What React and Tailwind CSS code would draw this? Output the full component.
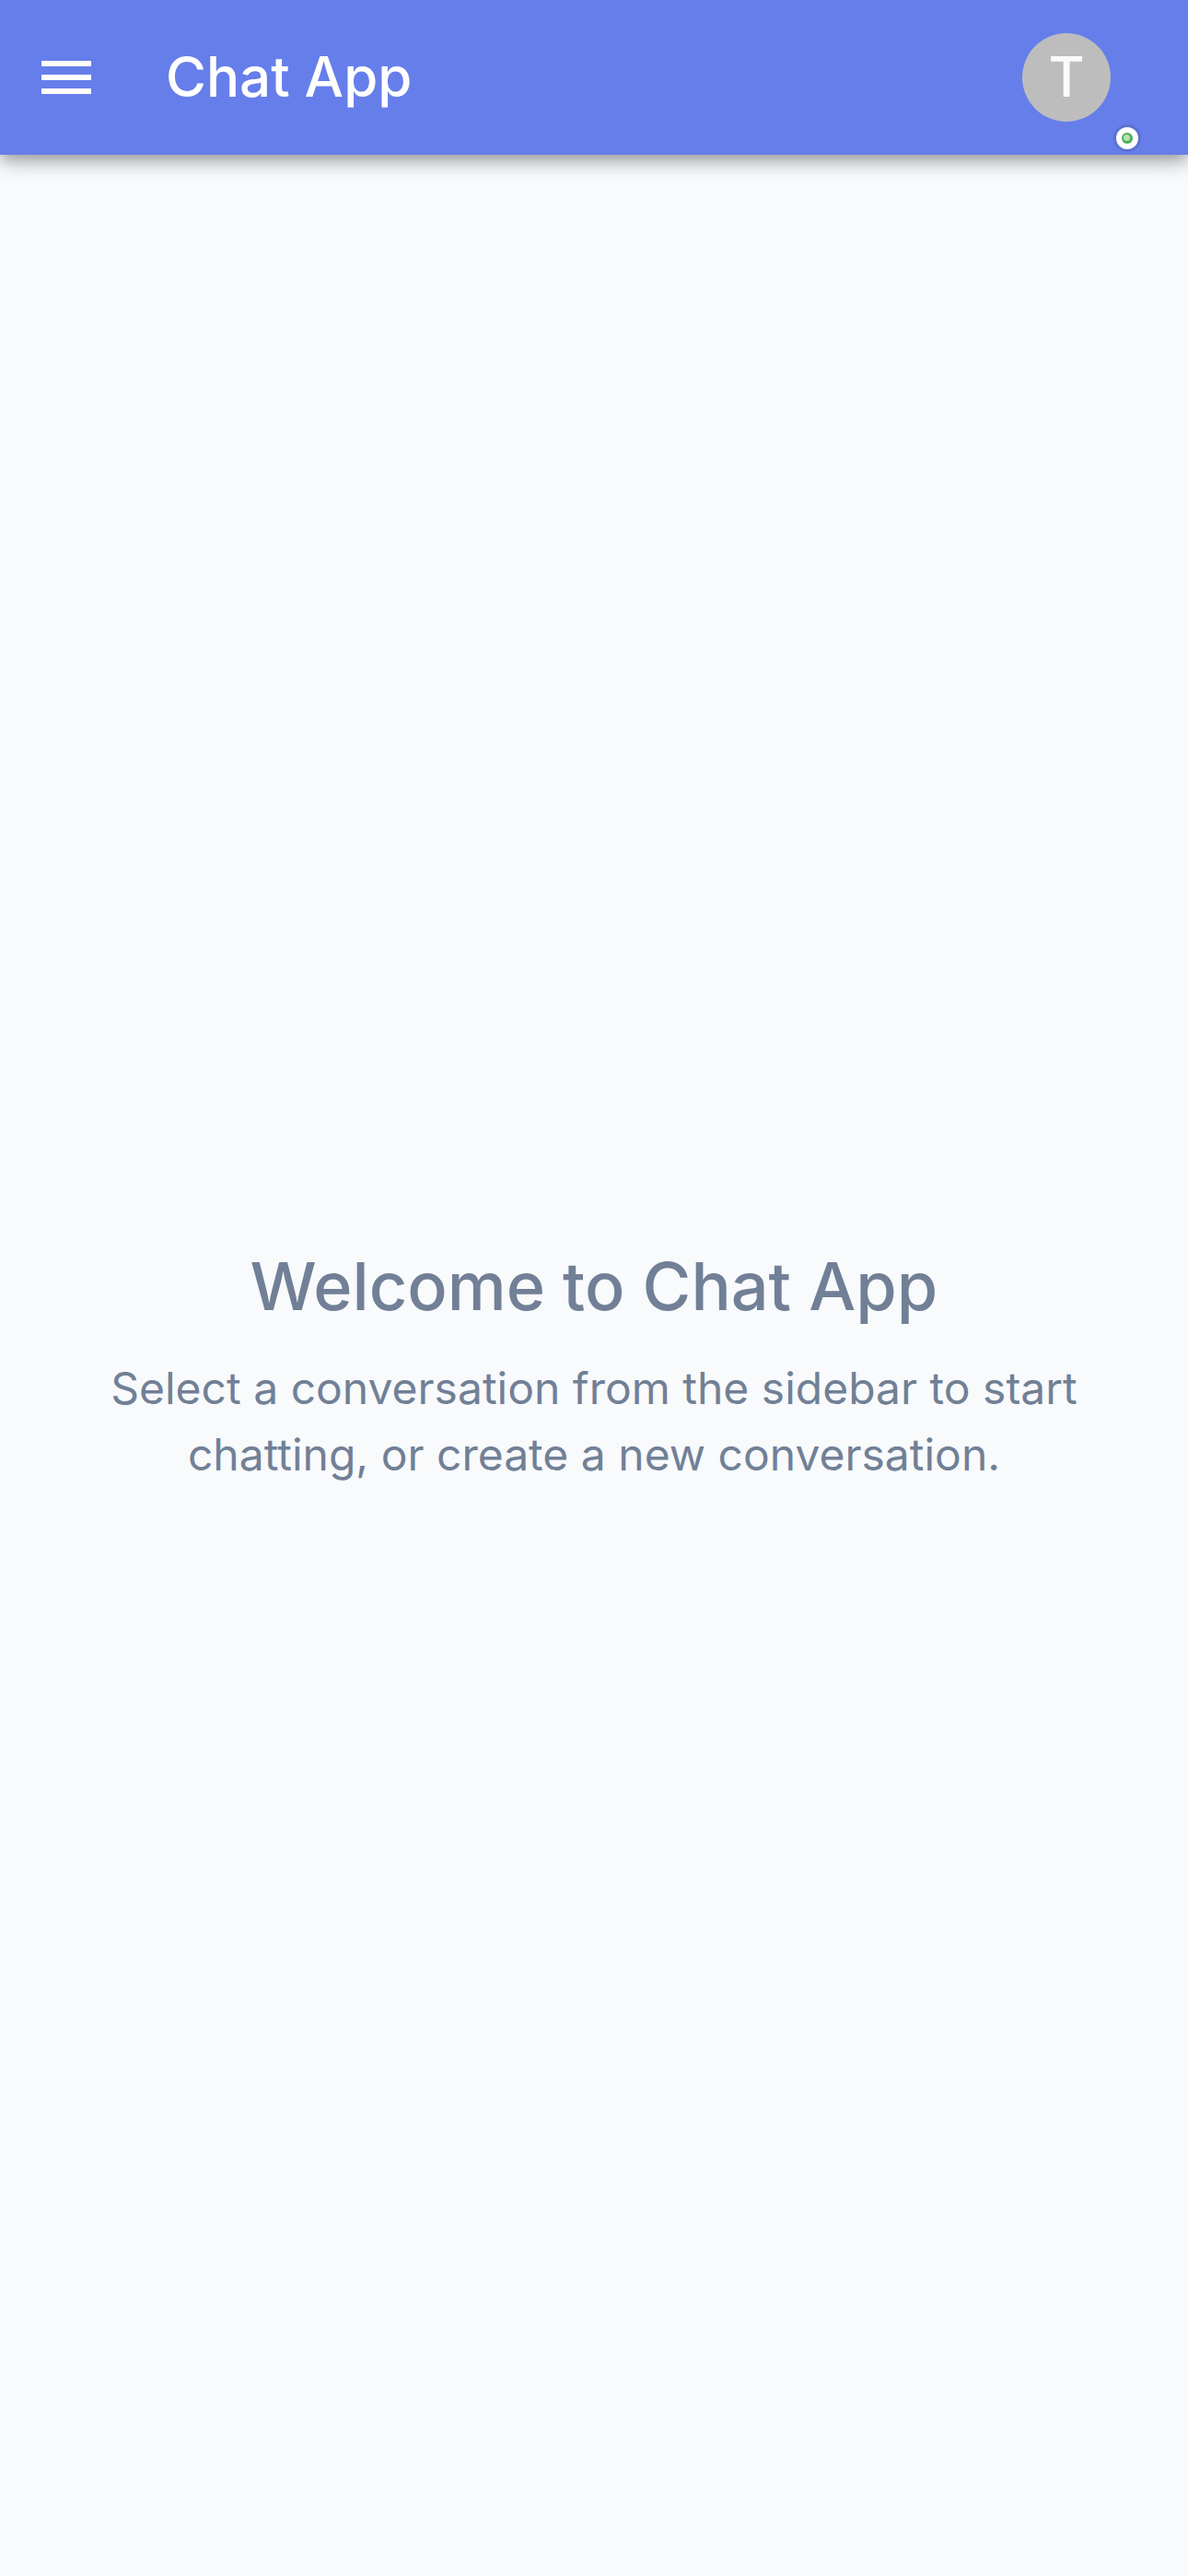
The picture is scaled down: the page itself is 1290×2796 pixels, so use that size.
export default function App() {
  return (
    <div className="flex h-[2796px] w-[1290px] flex-col bg-[#f8fafc] font-[Inter,sans-serif]">
      <header className="relative z-10 flex h-[168px] shrink-0 items-center bg-[#667eea] px-[36px] text-white shadow-[0_6px_12px_-3px_rgba(0,0,0,0.2),0_12px_15px_0_rgba(0,0,0,0.14),0_3px_30px_0_rgba(0,0,0,0.12)]">
        <button className="flex size-[72px] items-center justify-center" aria-label="Open menu">
          <svg viewBox="0 0 24 24" className="size-[72px] fill-current">
            <path d="M3 18h18v-2H3zm0-5h18v-2H3zm0-7v2h18V6z" />
          </svg>
        </button>
        <h1 className="ml-[72px] grow pb-[2px] text-[60px] leading-[96px] font-medium">Chat App</h1>
        <div className="relative mr-[48px] flex size-[96px] items-center justify-center rounded-full bg-[#bdbdbd] pb-[2px] text-[60px] leading-none font-medium text-[#f8fafc]">
          T
          <span className="absolute -right-[30px] -bottom-[30px] flex size-[24px] items-center justify-center rounded-full bg-white shadow-[0_0_0_3px_rgba(0,0,0,0.1)]">
            <span className="flex size-[12px] rounded-full bg-[#4caf50] pt-[2px] pl-[2px]">
              <span className="size-[7px] rounded-full bg-white/60" />
            </span>
          </span>
        </div>
      </header>
      <main className="flex grow flex-col items-center justify-center pb-px text-center text-[#718096]">
        <h2 className="mb-[27px] text-[72px] leading-[96px] font-medium">Welcome to Chat App</h2>
        <p className="w-[1146px] text-[48px] leading-[72px]">Select a conversation from the sidebar to start chatting, or create a new conversation.</p>
      </main>
    </div>
  );
}
